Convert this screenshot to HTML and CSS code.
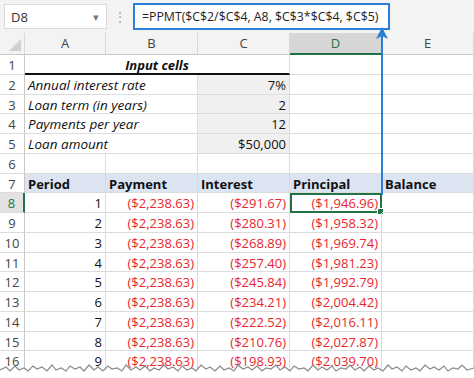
FILE: index.html
```html
<!DOCTYPE html>
<html lang="en">
<head>
  <meta charset="UTF-8">
  <title>PPMT</title>
  <link rel="stylesheet" href="styles.css">
</head>
<body>

<div class="window">
  <!-- Barre de formule -->
  <div class="formula-bar">
    <div class="name-box">
      <span>D8</span>
      <span class="drop">&#9662;</span>
    </div>
    <div class="dots">&#8942;</div>
    <div class="formula">=PPMT($C$2/$C$4, A8, $C$3*$C$4, $C$5)</div>
  </div>

  <!-- Feuille -->
  <div class="sheet">
    <div class="hd corner"><svg width="12" height="12" viewBox="0 0 12 12"><polygon points="12,0 12,12 0,12" fill="#d0d0d0"/></svg></div>
    <div class="hd">A</div>
    <div class="hd">B</div>
    <div class="hd">C</div>
    <div class="hd hd-sel">D</div>
    <div class="hd">E</div>

    <div class="rh">1</div>
    <div class="c title span3">Input cells</div>
    <div class="c"></div>
    <div class="c"></div>

    <div class="rh">2</div>
    <div class="c label span2">Annual interest rate</div>
    <div class="c num input">7%</div>
    <div class="c"></div>
    <div class="c"></div>

    <div class="rh">3</div>
    <div class="c label span2">Loan term (in years)</div>
    <div class="c num input">2</div>
    <div class="c"></div>
    <div class="c"></div>

    <div class="rh">4</div>
    <div class="c label span2">Payments per year</div>
    <div class="c num input">12</div>
    <div class="c"></div>
    <div class="c"></div>

    <div class="rh">5</div>
    <div class="c label span2">Loan amount</div>
    <div class="c num input">$50,000</div>
    <div class="c"></div>
    <div class="c"></div>

    <div class="rh">6</div>
    <div class="c"></div>
    <div class="c"></div>
    <div class="c"></div>
    <div class="c"></div>
    <div class="c"></div>

    <div class="rh">7</div>
    <div class="c th">Period</div>
    <div class="c th">Payment</div>
    <div class="c th">Interest</div>
    <div class="c th">Principal</div>
    <div class="c th">Balance</div>

    <div class="rh rh-sel">8</div>
    <div class="c num">1</div>
    <div class="c num neg">($2,238.63)</div>
    <div class="c num neg">($291.67)</div>
    <div class="c num neg selected">($1,946.96)<span class="handle"></span></div>
    <div class="c"></div>

    <div class="rh">9</div>
    <div class="c num">2</div>
    <div class="c num neg">($2,238.63)</div>
    <div class="c num neg">($280.31)</div>
    <div class="c num neg">($1,958.32)</div>
    <div class="c"></div>

    <div class="rh">10</div>
    <div class="c num">3</div>
    <div class="c num neg">($2,238.63)</div>
    <div class="c num neg">($268.89)</div>
    <div class="c num neg">($1,969.74)</div>
    <div class="c"></div>

    <div class="rh">11</div>
    <div class="c num">4</div>
    <div class="c num neg">($2,238.63)</div>
    <div class="c num neg">($257.40)</div>
    <div class="c num neg">($1,981.23)</div>
    <div class="c"></div>

    <div class="rh">12</div>
    <div class="c num">5</div>
    <div class="c num neg">($2,238.63)</div>
    <div class="c num neg">($245.84)</div>
    <div class="c num neg">($1,992.79)</div>
    <div class="c"></div>

    <div class="rh">13</div>
    <div class="c num">6</div>
    <div class="c num neg">($2,238.63)</div>
    <div class="c num neg">($234.21)</div>
    <div class="c num neg">($2,004.42)</div>
    <div class="c"></div>

    <div class="rh">14</div>
    <div class="c num">7</div>
    <div class="c num neg">($2,238.63)</div>
    <div class="c num neg">($222.52)</div>
    <div class="c num neg">($2,016.11)</div>
    <div class="c"></div>

    <div class="rh">15</div>
    <div class="c num">8</div>
    <div class="c num neg">($2,238.63)</div>
    <div class="c num neg">($210.76)</div>
    <div class="c num neg">($2,027.87)</div>
    <div class="c"></div>

    <div class="rh">16</div>
    <div class="c num">9</div>
    <div class="c num neg">($2,238.63)</div>
    <div class="c num neg">($198.93)</div>
    <div class="c num neg">($2,039.70)</div>
    <div class="c"></div>
  </div>

  <!-- Flèche vers la formule -->
  <svg class="arrow" width="16" height="168" viewBox="0 0 16 168">
    <line x1="8" y1="8" x2="8" y2="168" stroke="#2c7fd8" stroke-width="2"/>
    <polygon points="8,0 14,12 8,9 2,12" fill="#2c7fd8"/>
  </svg>

  <!-- Bord déchiré -->
  <svg class="torn" width="474" height="16" viewBox="0 0 474 16">
    <polygon fill="#fff" points="0,16 0,8 6,5 10,9 15,4 19,8 24,6 28,9 33,4 37,7 42,5 47,9 52,3 56,8 61,6 66,9 70,4 75,7 80,5 84,9 89,3 94,8 98,5 103,9 108,4 112,7 117,6 122,9 126,3 131,8 136,5 140,8 145,4 150,9 154,6 159,8 164,3 168,7 173,5 178,9 182,4 187,8 192,6 196,9 201,3 206,7 210,5 215,9 220,4 224,8 229,6 234,9 238,3 243,7 248,5 252,8 257,4 262,9 266,6 271,7 276,3 280,8 285,5 290,9 294,4 299,7 304,6 308,9 313,3 318,8 322,5 327,8 332,4 336,9 341,6 346,7 350,3 355,8 360,5 364,9 369,4 374,8 378,6 383,9 388,3 392,7 397,5 402,9 406,4 411,8 416,6 420,9 425,3 430,7 434,5 439,8 444,4 448,9 453,6 458,7 462,3 467,8 474,6 474,16"/>
    <polyline fill="none" stroke="#8a8a8a" stroke-width="1.2" points="0,8 6,5 10,9 15,4 19,8 24,6 28,9 33,4 37,7 42,5 47,9 52,3 56,8 61,6 66,9 70,4 75,7 80,5 84,9 89,3 94,8 98,5 103,9 108,4 112,7 117,6 122,9 126,3 131,8 136,5 140,8 145,4 150,9 154,6 159,8 164,3 168,7 173,5 178,9 182,4 187,8 192,6 196,9 201,3 206,7 210,5 215,9 220,4 224,8 229,6 234,9 238,3 243,7 248,5 252,8 257,4 262,9 266,6 271,7 276,3 280,8 285,5 290,9 294,4 299,7 304,6 308,9 313,3 318,8 322,5 327,8 332,4 336,9 341,6 346,7 350,3 355,8 360,5 364,9 369,4 374,8 378,6 383,9 388,3 392,7 397,5 402,9 406,4 411,8 416,6 420,9 425,3 430,7 434,5 439,8 444,4 448,9 453,6 458,7 462,3 467,8 474,6"/>
  </svg>
</div>

</body>
</html>
```

FILE: styles.css
```css
body {
  margin: 0;
  background-color: #fff;
  font-family: "Open Sans", "Liberation Sans", sans-serif;
}

.window {
  position: relative;
  width: 474px;
  height: 378px;
  overflow: hidden;
  background-color: #fff;
}

.formula-bar {
  display: flex;
  align-items: center;
  height: 33px;
  background-color: #f3f3f3;
  padding: 0 0 0 4px;
  box-sizing: border-box;
}

.name-box {
  display: flex;
  justify-content: space-between;
  align-items: center;
  width: 103px;
  height: 25px;
  background-color: #fff;
  border: 1px solid #dadada;
  box-sizing: border-box;
  padding: 0 7px 0 6px;
  font-size: 13px;
  color: #333;
}

.name-box .drop {
  font-size: 11px;
  color: #777;
}

.dots {
  width: 26px;
  text-align: center;
  color: #aaa;
  font-size: 14px;
}

.formula {
  width: 257px;
  height: 27px;
  border: 2px solid #2c7fd8;
  background-color: #fff;
  box-sizing: border-box;
  padding-left: 7px;
  font-size: 12.3px;
  line-height: 23px;
  color: #222;
  white-space: nowrap;
}

.sheet {
  display: grid;
  grid-template-columns: 25px 81px 92px 92px 92px 92px;
  grid-template-rows: 22px;
  grid-auto-rows: 19.75px;
  font-size: 13px;
  color: #111;
}

.hd {
  background-color: #f3f3f3;
  border-right: 1px solid #d8d8d8;
  border-bottom: 1px solid #c8c8c8;
  box-sizing: border-box;
  text-align: center;
  line-height: 21px;
  font-size: 13px;
  color: #444;
}

.hd.corner {
  display: flex;
  align-items: flex-end;
  justify-content: flex-end;
  padding: 0 3px 3px 0;
}

.hd-sel {
  background-color: #d6d6d6;
  border-bottom: 2px solid #217346;
  color: #217346;
}

.rh {
  background-color: #fff;
  border-right: 1px solid #c8c8c8;
  border-bottom: 1px solid #dcdcdc;
  box-sizing: border-box;
  text-align: center;
  font-size: 13px;
  line-height: 20px;
  color: #444;
}

.rh-sel {
  background-color: #e2e2e2;
  border-right: 2px solid #217346;
  color: #217346;
}

.c {
  position: relative;
  border-right: 1px solid #dcdcdc;
  border-bottom: 1px solid #dcdcdc;
  box-sizing: border-box;
  padding: 1px 3px 0;
  line-height: 19px;
  white-space: nowrap;
}

.span2 {
  grid-column: span 2;
}

.span3 {
  grid-column: span 3;
}

.title {
  text-align: center;
  font-weight: bold;
  font-style: italic;
  border-bottom: 2px solid #111;
}

.label {
  font-style: italic;
  font-size: 13.5px;
}

.num {
  text-align: right;
}

.input {
  background-color: #f0f0f0;
}

.th {
  background-color: #dce3f1;
  font-weight: bold;
}

.neg {
  color: #e8262e;
}

.selected {
  border: 2px solid #217346;
  padding: 0 2px 0 3px;
  line-height: 16px;
}

.handle {
  position: absolute;
  right: -4px;
  bottom: -4px;
  width: 5px;
  height: 5px;
  background-color: #217346;
  border: 1px solid #fff;
}

.arrow {
  position: absolute;
  left: 374px;
  top: 27px;
}

.torn {
  position: absolute;
  left: 0;
  bottom: 0;
}
```
